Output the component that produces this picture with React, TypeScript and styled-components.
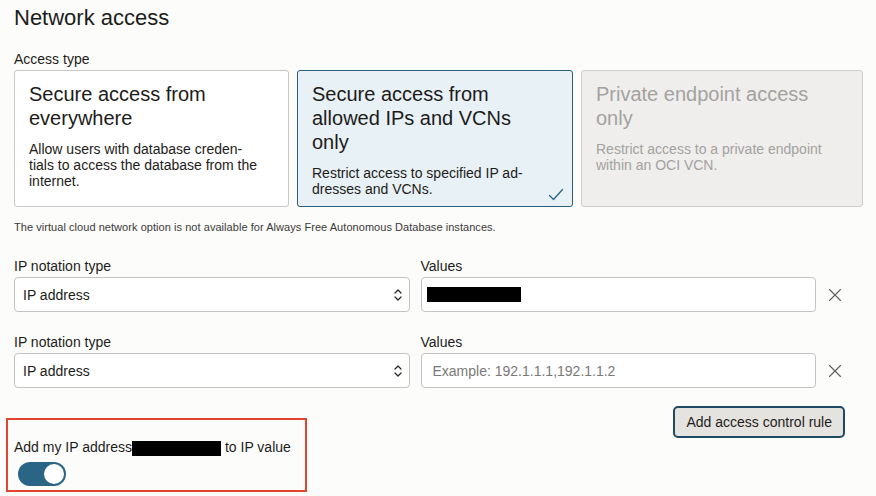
import React from "react";
import styled, { createGlobalStyle, css } from "styled-components";

const GlobalStyle = createGlobalStyle`
  html, body {
    margin: 0;
    padding: 0;
    background: #fcfcfb;
  }
  body {
    font-family: "Liberation Sans", Arial, Helvetica, sans-serif;
    color: #1d1c1a;
  }
  * { box-sizing: border-box; }
`;

const Page = styled.div`
  width: 876px;
  padding: 5px 13px 0 14px;
`;

const Title = styled.h2`
  margin: 0;
  font-size: 22px;
  line-height: 26px;
  font-weight: 400;
`;

const Label = styled.div<{ $top?: number }>`
  margin-top: ${(p) => p.$top ?? 0}px;
  margin-bottom: 2px;
  font-size: 14px;
  line-height: 18px;
`;

const CardGrid = styled.div`
  display: grid;
  grid-template-columns: 275px 276px 282px;
  gap: 8px;
  margin-top: 2px;
`;

const Card = styled.div<{ $state: "idle" | "selected" | "disabled" }>`
  position: relative;
  height: 137px;
  padding: 11px 26px 0 14px;
  border-radius: 3px;
  border: 1px solid #c9c8c6;
  background: #ffffff;
  ${(p) =>
    p.$state === "selected" &&
    css`
      border-color: #2b5d7c;
      background: #e8f1f5;
    `}
  ${(p) =>
    p.$state === "disabled" &&
    css`
      border-color: #cfcecc;
      background: #efeeec;
      color: #a3a2a0;
    `}
`;

const CardTitle = styled.div`
  font-size: 20px;
  line-height: 24px;
`;

const CardText = styled.div`
  margin-top: 11px;
  font-size: 14px;
  line-height: 16px;
`;

const Check = styled.svg`
  position: absolute;
  right: 8px;
  bottom: 5px;
`;

const Note = styled.p`
  margin: 13px 0 0;
  font-size: 11px;
  line-height: 14px;
  letter-spacing: 0.05px;
  color: #3b3a38;
`;

const RuleRow = styled.div<{ $top: number }>`
  display: grid;
  grid-template-columns: 1fr 1fr 36px;
  column-gap: 11px;
  margin-top: ${(p) => p.$top}px;
`;

const Column = styled.div`
  display: flex;
  flex-direction: column;
`;

const fieldBox = css`
  height: 35px;
  width: 100%;
  border: 1px solid #c4c3c1;
  border-radius: 4px;
  background: #ffffff;
  font-family: "Liberation Sans", Arial, Helvetica, sans-serif;
  font-size: 14px;
  color: #1d1c1a;
`;

const Select = styled.div`
  ${fieldBox};
  display: flex;
  align-items: center;
  justify-content: space-between;
  padding: 0 6px 0 8px;
`;

const ValueBox = styled.div`
  ${fieldBox};
  display: flex;
  align-items: center;
  padding: 0 5px;
`;

const ValueInput = styled.input`
  ${fieldBox};
  padding: 0 11px;
  outline: none;
  &::placeholder {
    color: #7a7977;
  }
`;

const Redacted = styled.span<{ $w: number }>`
  display: inline-block;
  width: ${(p) => p.$w}px;
  height: 15px;
  background: #000;
  vertical-align: middle;
`;

const RemoveButton = styled.button`
  align-self: end;
  height: 35px;
  width: 16px;
  padding: 0;
  border: 0;
  background: transparent;
  display: flex;
  align-items: center;
  justify-content: center;
  cursor: pointer;
`;

const Footer = styled.div`
  display: flex;
  align-items: flex-start;
  justify-content: space-between;
  margin-top: 18px;
  padding-right: 18px;
`;

const Highlight = styled.div`
  width: 301px;
  height: 74px;
  margin: 12px 0 0 -8px;
  padding: 18px 0 0 6px;
  border: 2px solid #e2452d;
`;

const ToggleLabel = styled.div`
  font-size: 14px;
  line-height: 18px;
  white-space: nowrap;
`;

const Toggle = styled.div<{ $on: boolean }>`
  position: relative;
  width: 48px;
  height: 24px;
  margin: 6px 0 0 4px;
  border-radius: 12px;
  background: ${(p) => (p.$on ? "#2b6586" : "#b9b8b6")};
  &::after {
    content: "";
    position: absolute;
    top: 2px;
    left: ${(p) => (p.$on ? "26px" : "2px")};
    width: 20px;
    height: 20px;
    border-radius: 50%;
    background: #ffffff;
  }
`;

const AddButton = styled.button`
  height: 32px;
  padding: 0 11px;
  border: 2px solid #1f4a63;
  border-radius: 5px;
  background: #e5e3e0;
  font-family: "Liberation Sans", Arial, Helvetica, sans-serif;
  font-size: 14px;
  color: #1d1c1a;
  cursor: pointer;
`;

const Chevrons = () => (
  <svg width="10" height="16" viewBox="0 0 10 16" fill="none" stroke="#2a2927" strokeWidth="1.3" strokeLinecap="round" strokeLinejoin="round">
    <polyline points="2,6 5,3 8,6" />
    <polyline points="2,10 5,13 8,10" />
  </svg>
);

const CloseIcon = () => (
  <svg width="14" height="14" viewBox="0 0 14 14" fill="none" stroke="#5f5e5c" strokeWidth="1.1" strokeLinecap="round">
    <line x1="1.5" y1="1.5" x2="12.5" y2="12.5" />
    <line x1="12.5" y1="1.5" x2="1.5" y2="12.5" />
  </svg>
);

const rules = [
  { id: 1, redacted: true, top: 23 },
  { id: 2, redacted: false, top: 21 },
];

export default function App() {
  return (
    <>
      <GlobalStyle />
      <Page>
        <Title>Network access</Title>
        <Label $top={19}>Access type</Label>
        <CardGrid>
          <Card $state="idle">
            <CardTitle>Secure access from everywhere</CardTitle>
            <CardText>
              Allow users with database creden{"\u00AD"}tials to access the database from the internet.
            </CardText>
          </Card>
          <Card $state="selected">
            <CardTitle>Secure access from allowed IPs and VCNs only</CardTitle>
            <CardText>Restrict access to specified IP ad{"\u00AD"}dresses and VCNs.</CardText>
            <Check width="16" height="13" viewBox="0 0 16 13" fill="none" stroke="#2b6586" strokeWidth="1.3" strokeLinecap="round" strokeLinejoin="round">
              <polyline points="1.5,7.5 5.5,11.5 14.5,1.5" />
            </Check>
          </Card>
          <Card $state="disabled">
            <CardTitle>Private endpoint access only</CardTitle>
            <CardText>Restrict access to a private endpoint within an OCI VCN.</CardText>
          </Card>
        </CardGrid>
        <Note>The virtual cloud network option is not available for Always Free Autonomous Database instances.</Note>

        {rules.map((r) => (
          <RuleRow key={r.id} $top={r.top}>
            <Column>
              <Label>IP notation type</Label>
              <Select>
                <span>IP address</span>
                <Chevrons />
              </Select>
            </Column>
            <Column>
              <Label>Values</Label>
              {r.redacted ? (
                <ValueBox>
                  <Redacted $w={94} />
                </ValueBox>
              ) : (
                <ValueInput readOnly placeholder="Example: 192.1.1.1,192.1.1.2" />
              )}
            </Column>
            <RemoveButton aria-label="Remove rule">
              <CloseIcon />
            </RemoveButton>
          </RuleRow>
        ))}

        <Footer>
          <Highlight>
            <ToggleLabel>
              Add my IP address<Redacted $w={89} /> to IP value
            </ToggleLabel>
            <Toggle $on />
          </Highlight>
          <AddButton>Add access control rule</AddButton>
        </Footer>
      </Page>
    </>
  );
}
